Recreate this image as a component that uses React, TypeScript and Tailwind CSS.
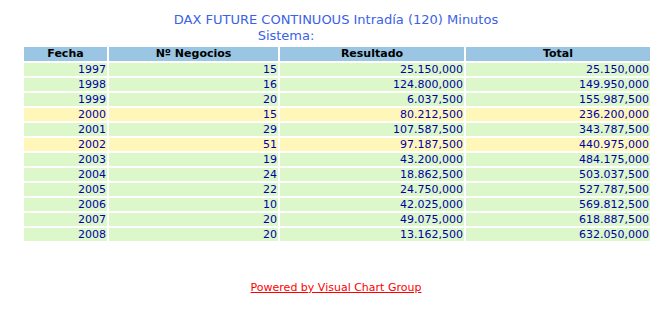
import React from "react";

const rows: [string, string, string, string, boolean][] = [
    ["1997", "15", "25.150,000", "25.150,000", false],
    ["1998", "16", "124.800,000", "149.950,000", false],
    ["1999", "20", "6.037,500", "155.987,500", false],
    ["2000", "15", "80.212,500", "236.200,000", true],
    ["2001", "29", "107.587,500", "343.787,500", false],
    ["2002", "51", "97.187,500", "440.975,000", true],
    ["2003", "19", "43.200,000", "484.175,000", false],
    ["2004", "24", "18.862,500", "503.037,500", false],
    ["2005", "22", "24.750,000", "527.787,500", false],
    ["2006", "10", "42.025,000", "569.812,500", false],
    ["2007", "20", "49.075,000", "618.887,500", false],
    ["2008", "20", "13.162,500", "632.050,000", false],
];

export default function App() {
    return (
        <div className="w-[672px] h-[318px] bg-white" style={{fontFamily: "'DejaVu Sans', Verdana, sans-serif"}}>
            {/* title */}
            <div className="pt-[12px] text-[13px] leading-[16px] text-[#3a62e6] text-center">
                <div>DAX FUTURE CONTINUOUS Intradía (120) Minutos</div>
                <div className="pr-[100px]">Sistema:</div>
            </div>

            {/* results table */}
            <div className="ml-[24px] mt-[3px] grid grid-cols-[83px_169px_184px_184px] gap-[2px] text-[11px]">
                <div className="bg-[#9ac6e4] h-[14px] leading-[14px] text-center font-bold text-black">Fecha</div>
                <div className="bg-[#9ac6e4] h-[14px] leading-[14px] text-center font-bold text-black">Nº Negocios</div>
                <div className="bg-[#9ac6e4] h-[14px] leading-[14px] text-center font-bold text-black">Resultado</div>
                <div className="bg-[#9ac6e4] h-[14px] leading-[14px] text-center font-bold text-black">Total</div>
                {rows.map(([year, ops, result, total, highlight]) => (
                    <React.Fragment key={year}>
                        {[year, ops, result, total].map((v, i) => (
                            <div
                                key={i}
                                className={
                                    "h-[13px] leading-[13px] text-right pr-px text-[#0000a8] " +
                                    (highlight ? "bg-[#fff7b9]" : "bg-[#dcf7c9]")
                                }
                            >
                                {v}
                            </div>
                        ))}
                    </React.Fragment>
                ))}
            </div>

            <div className="mt-[40px] text-center text-[11px] leading-[14px]">
                <a href="#" className="text-[#ff0000] underline">Powered by Visual Chart Group</a>
            </div>
        </div>
    );
}
